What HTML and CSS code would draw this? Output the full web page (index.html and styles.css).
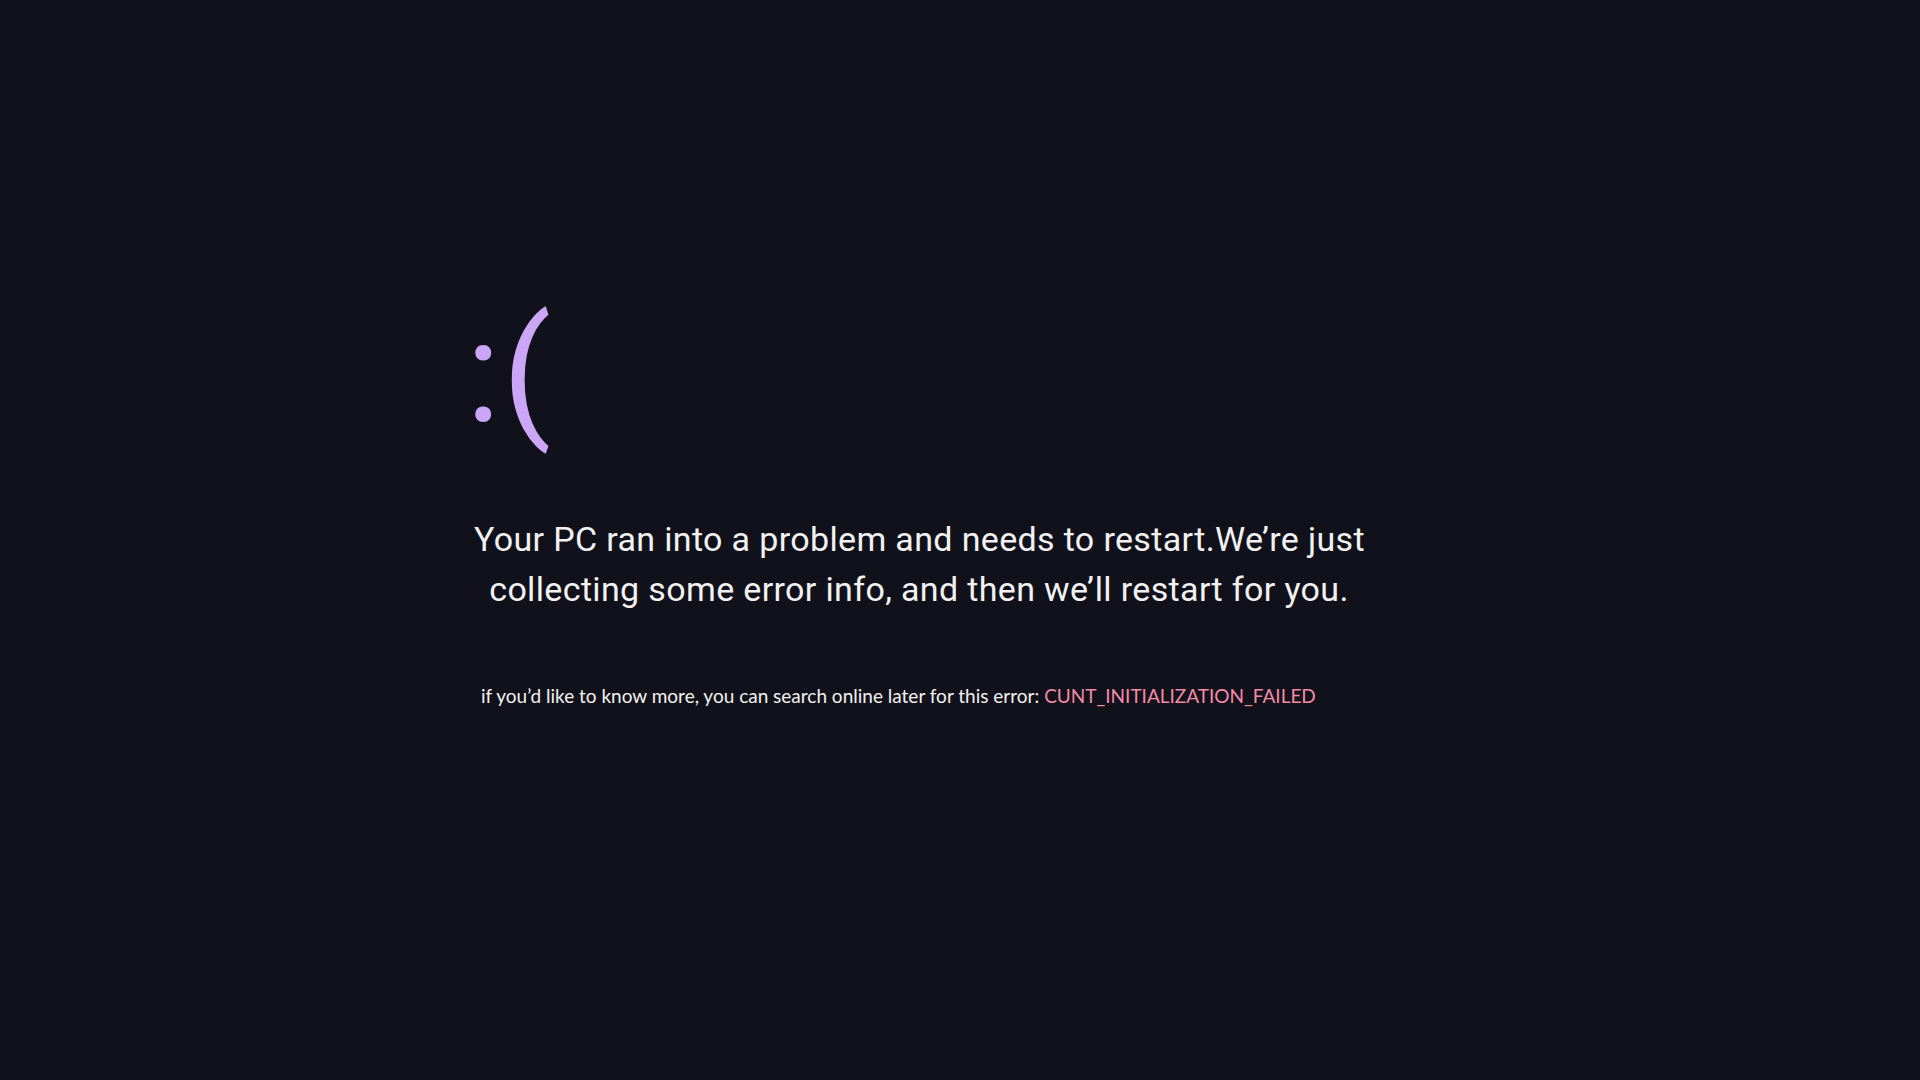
FILE: index.html
```html
<!DOCTYPE html>
<html lang="en">
<head>
<meta charset="utf-8">
<title>:(</title>
<link rel="stylesheet" href="styles.css">
</head>
<body>
<main class="screen">
  <div class="face">:(</div>
  <h1 class="message">Your PC ran into a problem and needs to restart.We’re just<br>collecting some error info, and then we’ll restart for you.</h1>
  <p class="info">if you’d like to know more, you can search online later for this error: <span class="code">CUNT_INITIALIZATION_FAILED</span></p>
</main>
</body>
</html>
```
FILE: styles.css
```css
html, body {
  margin: 0;
  padding: 0;
  background: #11111b;
  height: 100%;
}
.screen {
  box-sizing: border-box;
  height: 1080px;
  padding: 298px 0 0 466px;
  display: flex;
  flex-direction: column;
  align-items: flex-start;
}
.face {
  font-family: "Roboto", sans-serif;
  font-weight: 400;
  font-size: 142px;
  line-height: 150px;
  letter-spacing: 2px;
  color: #cba6f7;
}
.message {
  margin: 66px 0 0 8px;
  width: 890px;
  white-space: nowrap;
  text-align: center;
  font-family: "Roboto", sans-serif;
  font-weight: 400;
  font-size: 34px;
  line-height: 50px;
  color: #f2f2f2;
  letter-spacing: 0.35px;
}
.info {
  margin: 70px 0 0 15px;
  font-family: "Lato", sans-serif;
  font-size: 19px;
  color: #f2f2f2;
}
.code {
  color: #f38ba8;
}
```
